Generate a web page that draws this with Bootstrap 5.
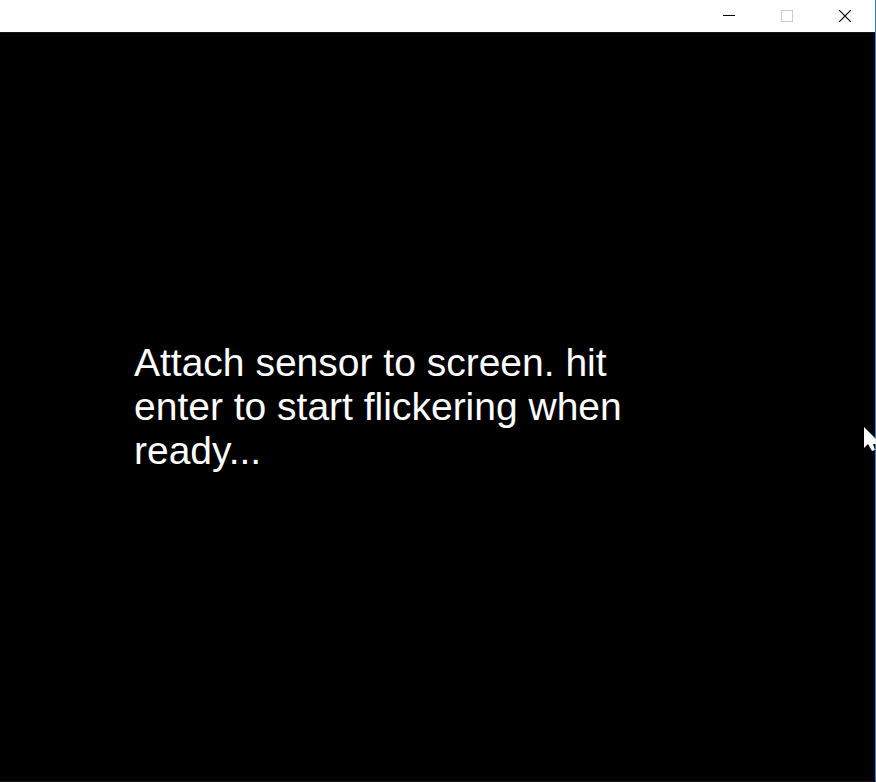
<!DOCTYPE html>
<html lang="en">
<head>
<meta charset="utf-8">
<meta name="viewport" content="width=device-width, initial-scale=1">
<title>Sensor check</title>
<link href="https://cdn.jsdelivr.net/npm/bootstrap@5.3.0/dist/css/bootstrap.min.css" rel="stylesheet">
<style>
body { font-family: "Liberation Sans", Arial, sans-serif; background: #000; }
.window-frame { border-right: 1px solid #2a86d1; border-bottom: 1px solid #1c1318; }
.title-bar { padding-right: 1px; border-bottom: 1px solid #141414; }
.caption-btn { width: 58px; height: 32px; color: #000; background: none; }
.caption-btn:disabled { color: #ccc; }
.message { width: 500px; margin-left: 134px; font-size: 39px; line-height: 44px; color: #fff; }
.pointer { right: 0; top: 427px; }
</style>
</head>
<body class="position-relative">
<div class="window-frame d-flex flex-column vh-100">
  <header class="title-bar bg-white d-flex justify-content-end">
    <button type="button" class="caption-btn border-0 p-0 d-flex align-items-center justify-content-center" aria-label="Minimize">
      <svg width="12" height="12" shape-rendering="crispEdges"><path d="M0 5.5H12" stroke="currentColor"/></svg>
    </button>
    <button type="button" class="caption-btn border-0 p-0 d-flex align-items-center justify-content-center" aria-label="Maximize" disabled>
      <svg width="12" height="12" shape-rendering="crispEdges"><path d="M.5 .5H11.5V11.5H.5Z" fill="none" stroke="currentColor"/></svg>
    </button>
    <button type="button" class="caption-btn border-0 p-0 d-flex align-items-center justify-content-center" aria-label="Close">
      <svg width="12" height="12"><path d="M0 0L12 12M12 0L0 12" stroke="currentColor" stroke-width="1.2"/></svg>
    </button>
  </header>
  <main class="flex-grow-1 d-flex align-items-center">
    <p class="message mb-0">Attach sensor to screen. hit enter to start flickering when ready...</p>
  </main>
</div>
<svg class="pointer position-absolute" width="12" height="26" aria-hidden="true"><path d="M0 0V21L4 17L8 24L11 23L9 17H12V12Z" fill="#fff"/></svg>
<script src="https://cdn.jsdelivr.net/npm/bootstrap@5.3.0/dist/js/bootstrap.bundle.min.js"></script>
</body>
</html>
